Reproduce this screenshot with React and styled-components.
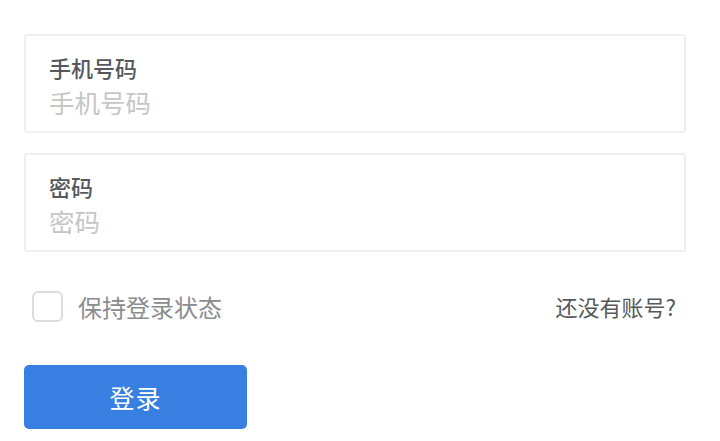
import styled, { createGlobalStyle } from 'styled-components'

const GlobalStyle = createGlobalStyle`
    body {
        margin: 0;
        background: #ffffff;
        font-family: "Noto Sans CJK SC", "Noto Sans", sans-serif;
    }
`;

const Form = styled.form`
    width: 662px;
    padding: 34px 0 0 24px;
    display: flex;
    flex-direction: column;
`;

const Fields = styled.div`
    display: flex;
    flex-direction: column;
    gap: 20px;
`;

const Field = styled.label`
    box-sizing: border-box;
    height: 99px;
    border: 2px solid #efefef;
    border-radius: 3px;
    padding: 18px 23px 0;
    display: flex;
    flex-direction: column;
`;

const FieldLabel = styled.span`
    font-size: 22px;
    line-height: 26px;
    font-weight: 500;
    color: #55595e;
    margin-bottom: 6px;
`;

const FieldInput = styled.input`
    border: none;
    outline: none;
    padding: 0;
    font-family: inherit;
    font-size: 25.5px;
    line-height: 32px;
    height: 32px;
    color: #333;
    background: transparent;

    &::placeholder {
        color: #c6c6c6;
    }
`;

const OptionsRow = styled.div`
    display: flex;
    align-items: center;
    justify-content: space-between;
    margin-top: 36px;
    height: 36px;
    padding: 0 10px 0 8px;
`;

const Remember = styled.label`
    display: flex;
    align-items: center;
    gap: 15px;
    font-size: 24px;
    color: #8a8c8f;
`;

const Box = styled.span`
    box-sizing: border-box;
    width: 31px;
    height: 31px;
    border: 2px solid #dcdcdc;
    border-radius: 6px;
    background: #fff;
`;

const SignupLink = styled.a`
    font-size: 22px;
    color: #55585c;
    text-decoration: none;
`;

const SubmitButton = styled.button`
    margin-top: 41px;
    width: 223px;
    height: 64px;
    border: none;
    border-radius: 5px;
    background: #387fe2;
    color: #ffffff;
    font-family: inherit;
    font-size: 25px;
    letter-spacing: 1px;
`;

const App = () => {
    return (
        <>
            <GlobalStyle />
            <Form onSubmit={e => e.preventDefault()}>
                <Fields>
                    <Field>
                        <FieldLabel>手机号码</FieldLabel>
                        <FieldInput type="tel" placeholder="手机号码" />
                    </Field>
                    <Field>
                        <FieldLabel>密码</FieldLabel>
                        <FieldInput type="password" placeholder="密码" />
                    </Field>
                </Fields>
                <OptionsRow>
                    <Remember>
                        <Box />
                        保持登录状态
                    </Remember>
                    <SignupLink href="#">还没有账号?</SignupLink>
                </OptionsRow>
                <SubmitButton type="submit">登录</SubmitButton>
            </Form>
        </>
    )
}

export default App
